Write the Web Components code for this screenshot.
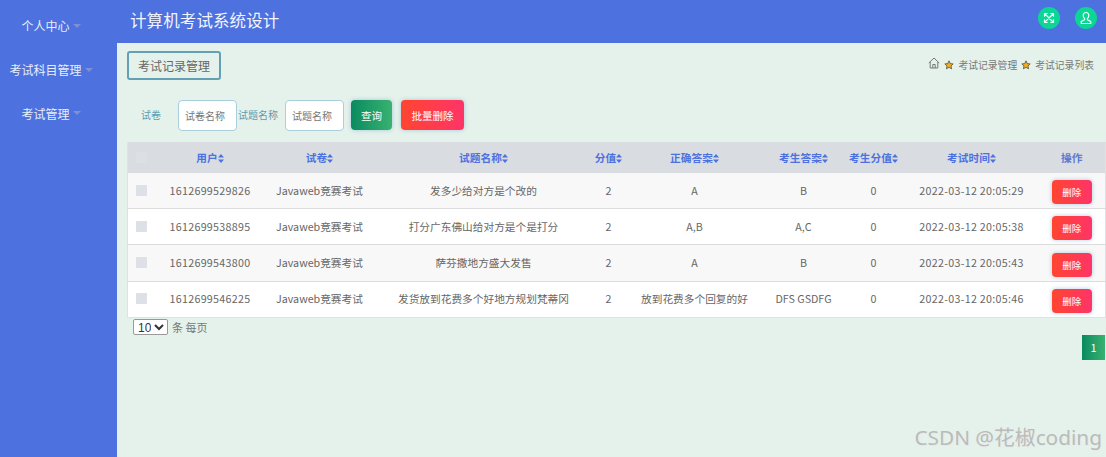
<!DOCTYPE html>
<html lang="zh">
<head>
<meta charset="utf-8">
<title>计算机考试系统设计</title>
<style>
  html, body { margin: 0; height: 100%; }
  body {
    width: 1106px;
    height: 457px;
    overflow: hidden;
    position: relative;
    display: grid;
    grid-template-columns: 117px 1fr;
    grid-template-rows: 43px 1fr;
    background: #4d71de;
    font-family: "Noto Sans CJK SC", "Noto Sans", sans-serif;
  }
  side-nav { grid-row: 1 / 3; }
  main {
    background: #e5f2eb;
    padding: 8px 1px 0 10px;
    display: flex;
    flex-direction: column;
    min-width: 0;
  }
</style>
</head>
<body>
  <side-nav>
    <nav-item>个人中心</nav-item>
    <nav-item>考试科目管理</nav-item>
    <nav-item>考试管理</nav-item>
  </side-nav>
  <top-bar>计算机考试系统设计</top-bar>
  <main>
    <page-head title-text="考试记录管理"></page-head>
    <search-bar></search-bar>
    <record-table></record-table>
    <table-foot></table-foot>
  </main>
  <water-mark>CSDN @花椒coding</water-mark>

<script>
class SideNav extends HTMLElement {
  constructor() {
    super();
    this.attachShadow({ mode: "open" });
    this.shadowRoot.innerHTML = `
      <style>
        :host { display: block; background: #4d71de; padding-top: 4px; }
      </style>
      <slot></slot>`;
  }
}

class NavItem extends HTMLElement {
  constructor() {
    super();
    this.attachShadow({ mode: "open" });
    this.shadowRoot.innerHTML = `
      <style>
        :host {
          display: flex; align-items: center; justify-content: center;
          height: 43.7px; padding-right: 15px;
          color: #e9eefc; font-size: 12px;
        }
        i {
          margin-left: 3px; width: 0; height: 0;
          border: 4px solid transparent; border-top: 4px solid #7d90d8; border-bottom: 0;
        }
      </style>
      <slot></slot><i></i>`;
  }
}

class TopBar extends HTMLElement {
  constructor() {
    super();
    this.attachShadow({ mode: "open" });
    this.shadowRoot.innerHTML = `
      <style>
        :host {
          display: flex; align-items: flex-start; justify-content: space-between;
          background: #4d71de; color: #f2f5fd;
          padding: 0 9px 0 13px;
        }
        .title { font-size: 16.5px; line-height: 40px; letter-spacing: .1px; }
        .tools { display: flex; gap: 15px; padding-top: 7px; }
        .tools span {
          width: 22px; height: 22px; border-radius: 50%; background: #0bd696;
          display: flex; align-items: center; justify-content: center;
        }
        svg { width: 14px; height: 14px; fill: none; stroke: #eafff6; stroke-width: 1.2; stroke-linecap: round; stroke-linejoin: round; }
      </style>
      <div class="title"><slot></slot></div>
      <div class="tools">
        <span><svg viewBox="0 0 14 14"><path d="M3 3l8 8M11 3l-8 8M2.500 5.200V2.500h2.700M8.800 2.500h2.700v2.700M11.500 8.800v2.700H8.800M5.200 11.500H2.500V8.800"/></svg></span>
        <span><svg viewBox="0 0 14 14"><path d="M7 1.500c-1.700 0-2.800 1.300-2.800 3 0 1.200.6 2.300 1.400 2.900v1.300L2.200 10.600v1.900h9.600v-1.900L8.400 8.700V7.400c.8-.6 1.400-1.700 1.400-2.900 0-1.700-1.100-3-2.800-3z"/></svg></span>
      </div>`;
  }
}

class PageHead extends HTMLElement {
  constructor() {
    super();
    this.attachShadow({ mode: "open" });
    const name = this.getAttribute("title-text");
    const star = `<svg class="star" viewBox="0 0 12 12"><path d="M6 1l1.500 3.300 3.500.4-2.600 2.400.7 3.500L6 8.800l-3.100 1.800.7-3.500L1 4.700l3.500-.4z"/></svg>`;
    this.shadowRoot.innerHTML = `
      <style>
        :host { display: flex; justify-content: space-between; align-items: flex-start; height: 29px; }
        .tab {
          box-sizing: border-box; width: 94px; height: 29px;
          border: 2px solid #659fb4; border-radius: 3px;
          color: #666; font-size: 12px; line-height: 25px; text-align: center;
        }
        .crumbs {
          display: flex; align-items: center; height: 13px; margin: 7px 7px 0 0;
          font-size: 9.8px; color: #777;
        }
        .home { width: 12px; height: 12px; fill: none; stroke: #777; stroke-width: 1; margin: -3px 4px 0 0; }
        .star { width: 10px; height: 10px; fill: #f4ad18; stroke: #555; stroke-width: 1; margin-right: 4px; }
        b { font-weight: 400; margin-right: 4px; }
      </style>
      <div class="tab">${name}</div>
      <div class="crumbs">
        <svg class="home" viewBox="0 0 12 12"><path d="M.8 6L6 1l5.200 5M2.200 5v6h7.600V5M4.800 11V7.500h2.400V11"/></svg>
        ${star}<b>考试记录管理</b>${star}<b>考试记录列表</b>
      </div>`;
  }
}

class GradBtn extends HTMLElement {
  constructor() {
    super();
    this.attachShadow({ mode: "open" });
    this.shadowRoot.innerHTML = `
      <style>
        :host {
          display: inline-flex; align-items: center; justify-content: center;
          box-sizing: border-box; border-radius: 4px;
          color: #fff; font-size: 10.5px;
          background: linear-gradient(90deg, #0a8a60, #39b270);
          box-shadow: 0 0 4px rgba(90, 140, 200, .45);
        }
        :host([kind="red"]) { background: linear-gradient(90deg, #ff4530, #ff3468); }
      </style>
      <slot></slot>`;
  }
}

class SearchBar extends HTMLElement {
  constructor() {
    super();
    this.attachShadow({ mode: "open" });
    this.shadowRoot.innerHTML = `
      <style>
        :host { display: flex; align-items: flex-start; height: 31px; margin: 20px 0 11px; font-size: 10px; color: #5f9cb0; }
        label { line-height: 30px; }
        input {
          box-sizing: border-box; width: 59px; height: 31px; padding: 0 0 0 6px;
          border: 1.500px solid #a9cfdc; border-radius: 4px; background: #fff;
          font: 10px "Noto Sans CJK SC", sans-serif; outline: none;
        }
        input::placeholder { color: #777; opacity: 1; }
        .a { margin: 0 17px 0 14px; }
        .b { margin: 0 7px 0 1px; }
        .q { width: 41px; height: 30px; margin-left: 7px; }
        .d { width: 63px; height: 30px; margin-left: 9px; }
      </style>
      <label class="a">试卷</label>
      <input placeholder="试卷名称">
      <label class="b">试题名称</label>
      <input placeholder="试题名称">
      <grad-btn class="q">查询</grad-btn>
      <grad-btn class="d" kind="red">批量删除</grad-btn>`;
  }
}

class RecordTable extends HTMLElement {
  constructor() {
    super();
    this.attachShadow({ mode: "open" });
    const cols = [28, 109, 110, 218, 32, 140, 78, 62, 134, 67];
    const heads = ["用户", "试卷", "试题名称", "分值", "正确答案", "考生答案", "考生分值", "考试时间"];
    const rows = [
      ["1612699529826", "Javaweb竞赛考试", "发多少给对方是个改的", "2", "A", "B", "0", "2022-03-12 20:05:29"],
      ["1612699538895", "Javaweb竞赛考试", "打分广东佛山给对方是个是打分", "2", "A,B", "A,C", "0", "2022-03-12 20:05:38"],
      ["1612699543800", "Javaweb竞赛考试", "萨芬撒地方盛大发售", "2", "A", "B", "0", "2022-03-12 20:05:43"],
      ["1612699546225", "Javaweb竞赛考试", "发货放到花费多个好地方规划梵蒂冈", "2", "放到花费多个回复的好", "DFS GSDFG", "0", "2022-03-12 20:05:46"],
    ];
    const sort = `<svg viewBox="0 0 6 9"><path d="M3 0l3 3.500H0zM3 9L0 5.500h6z"/></svg>`;
    // latin columns run a little wider than the CJK text beside them
    const cell = (c, i) => `<td class="${i === 0 || i === 7 ? "num" : ""}">${c}</td>`;
    this.shadowRoot.innerHTML = `
      <style>
        :host { display: block; }
        table {
          width: 977px; height: 176px; table-layout: fixed; border-collapse: collapse;
          background: #fff; font-size: 10.7px; color: #666;
          border: 1px solid #dfe1e3; border-top: 0;
        }
        th {
          height: 31px; padding: 0; background: #d9dde2;
          color: #4d71de; font-size: 10.700px; font-weight: 700;
        }
        th svg { width: 6px; height: 9px; fill: #4d71de; vertical-align: -1px; }
        th:last-child { color: #5f7ad0; }
        td { padding: 0 0 1px; text-align: center; border-bottom: 1px solid #dcdcdc; white-space: nowrap; }
        td.num { letter-spacing: .3px; }
        tbody tr:nth-child(odd) { background: #f8f8f8; }
        tbody tr:last-child td { border-bottom: 0; }
        .box { display: block; width: 11px; height: 11px; margin: 0 0 0 8px; background: #dde1e7; border-radius: 1px; }
        th .box { background: #dcdfe4; }
        grad-btn { width: 40px; height: 24px; margin-top: 4px; font-size: 9.500px; vertical-align: middle; }
      </style>
      <table>
        <colgroup>${cols.map((w) => `<col style="width:${w}px">`).join("")}</colgroup>
        <thead>
          <tr>
            <th><span class="box"></span></th>
            ${heads.map((h) => `<th>${h}${sort}</th>`).join("")}
            <th>操作</th>
          </tr>
        </thead>
        <tbody>
          ${rows.map((r) => `
            <tr>
              <td><span class="box"></span></td>
              ${r.map(cell).join("")}
              <td><grad-btn kind="red">删除</grad-btn></td>
            </tr>`).join("")}
        </tbody>
      </table>`;
  }
}

class TableFoot extends HTMLElement {
  constructor() {
    super();
    this.attachShadow({ mode: "open" });
    this.shadowRoot.innerHTML = `
      <style>
        :host { display: block; padding: 1px 0 0 6px; font-size: 11px; color: #777; }
        .size { display: flex; align-items: center; gap: 4px; height: 16px; }
        select {
          box-sizing: border-box; width: 35px; height: 16px; padding: 0;
          font: 12px "Liberation Sans", sans-serif; color: #333;
          background: #fff; border: 1px solid #999; border-radius: 2px;
        }
        .pages { display: flex; justify-content: flex-end; }
        .cur {
          width: 23px; height: 25px; color: #fff; font-size: 11px; line-height: 24px; text-align: center;
          background: linear-gradient(90deg, #0a8a60, #39b270);
        }
      </style>
      <div class="size">
        <select><option>10</option><option>25</option><option>50</option></select>
        <span>条 每页</span>
      </div>
      <div class="pages"><div class="cur">1</div></div>`;
  }
}

class WaterMark extends HTMLElement {
  constructor() {
    super();
    this.attachShadow({ mode: "open" });
    this.shadowRoot.innerHTML = `
      <style>
        :host {
          position: absolute; right: 4px; bottom: 6px;
          font: 20.800px "Noto Sans", "Noto Sans CJK SC", sans-serif;
          color: #b9bcba; text-shadow: 1px 1px 1px #e8e8e8;
          white-space: nowrap;
        }
      </style>
      <slot></slot>`;
  }
}

customElements.define("grad-btn", GradBtn);
customElements.define("side-nav", SideNav);
customElements.define("nav-item", NavItem);
customElements.define("top-bar", TopBar);
customElements.define("page-head", PageHead);
customElements.define("search-bar", SearchBar);
customElements.define("record-table", RecordTable);
customElements.define("table-foot", TableFoot);
customElements.define("water-mark", WaterMark);
</script>
</body>
</html>
